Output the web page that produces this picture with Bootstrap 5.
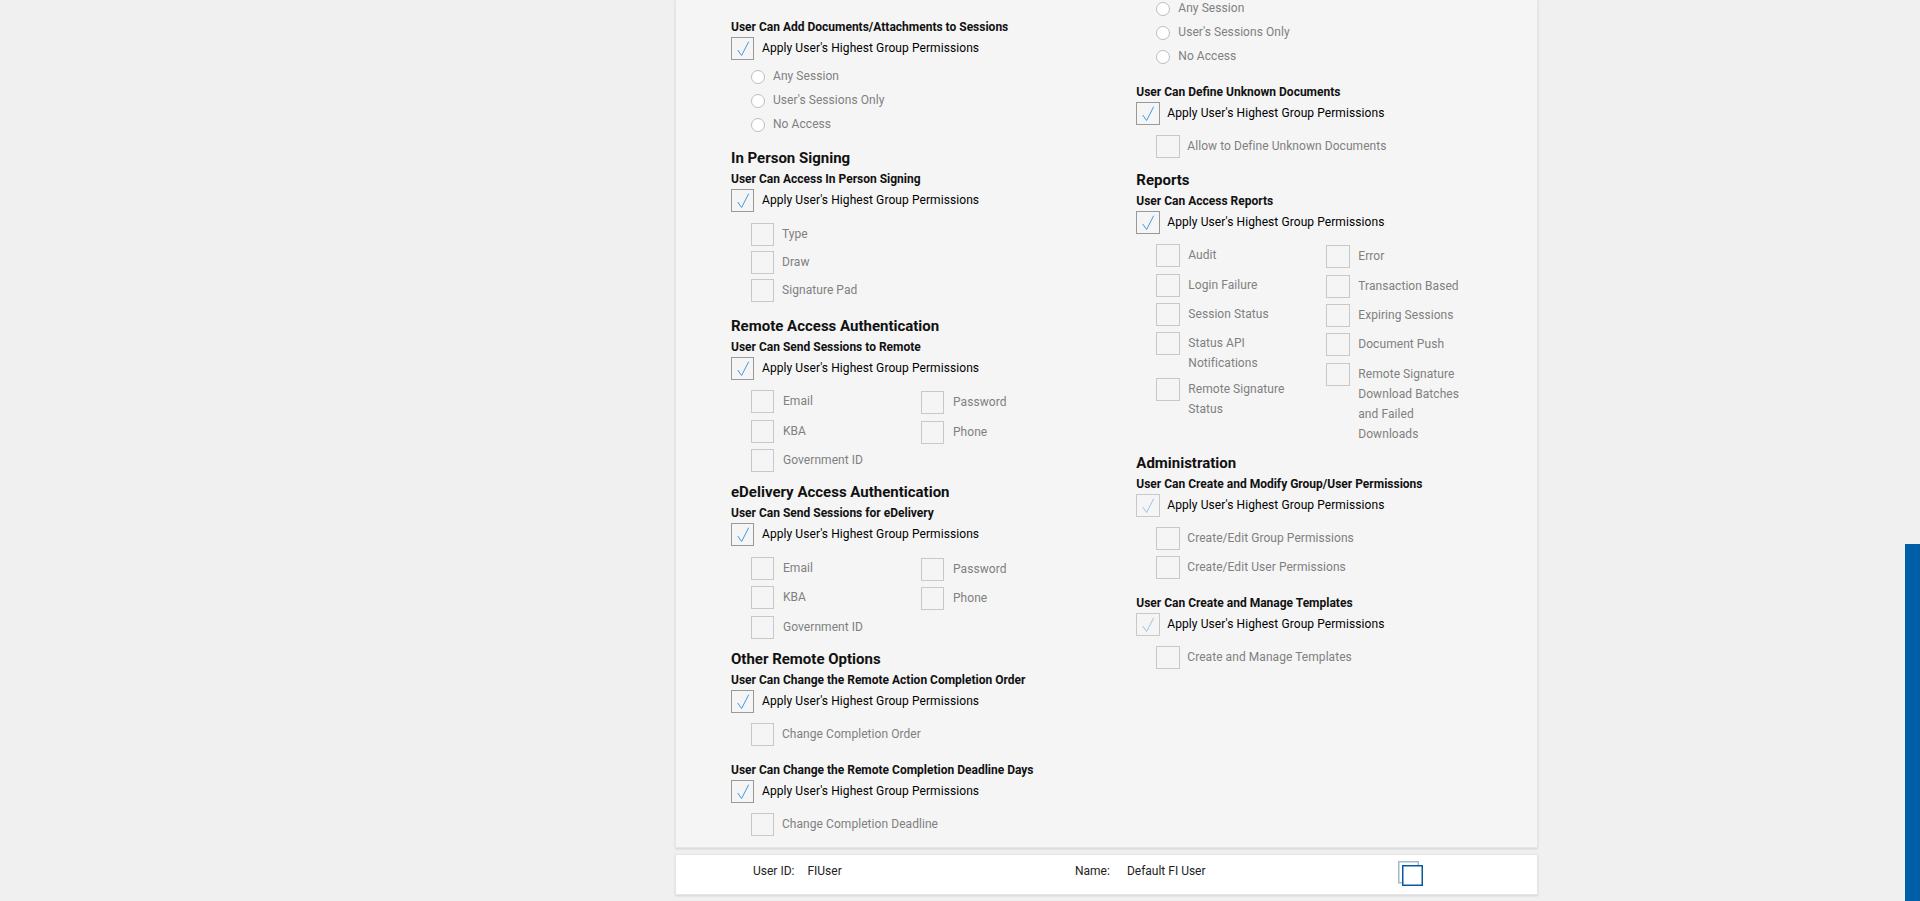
<!DOCTYPE html>
<html lang="en">
<head>
<meta charset="utf-8">
<title>Permissions</title>
<link href="https://cdn.jsdelivr.net/npm/bootstrap@5.3.0/dist/css/bootstrap.min.css" rel="stylesheet">
<style>
html,body{height:901px;overflow:hidden;background:#f0f0f0;}
body{font-family:Roboto,"Liberation Sans",sans-serif;font-size:12px;line-height:20px;color:#000;}
.stage{padding-left:675px;width:1538px;}
.panel{background:#f5f5f5;border:1px solid #e6e6e6;border-top:0;box-shadow:0 1px 2px rgba(0,0,0,.12);padding:0 0 10px 55px;height:848px;overflow:hidden;}
.col-a{width:405.3px;flex:none;padding-top:20px;}
.col-b{flex:none;margin-top:-3px;}
.sec-title{font-size:15px;line-height:20px;font-weight:700;color:#111;margin:0;}
.perm-title{font-size:12px;line-height:14px;font-weight:700;color:#111;margin:0;}
.apply-row{height:23px;margin-top:3px;column-gap:7.6px;line-height:22px;color:#000;letter-spacing:.08px;}
.tick-box{width:23.4px;height:23.4px;flex:none;border:1px solid #999;display:block;background:transparent;}
.tick-box svg{display:block;width:100%;height:100%;}
.tick-box.off{border-color:#c8c8c8;}
.tick-box.off svg{opacity:.5;}
.sub-list{margin-left:20px;}
.opt-row{min-height:24px;column-gap:7.6px;color:#808080;letter-spacing:.06px;}
.split .opt-row{column-gap:8.6px;}
.opt-text{padding-top:1px;line-height:20px;}
.opt-box.form-check-input{width:23.4px;height:23.4px;flex:none;margin:0;border:1px solid #c8c8c8;border-radius:0;background-color:transparent;opacity:1;}
.rad-row{height:24px;color:#808080;column-gap:8px;letter-spacing:.06px;}
.rad.form-check-input{width:14px;height:14px;flex:none;margin:5px 0 0;border:1px solid #bdbdbd;background-color:#fff;opacity:1;}
.rad-row span{line-height:22px;}
.split{width:340px;}
.split-a{width:170px;flex:none;}
.split-b{margin-top:1px;}
.narrow .opt-text{max-width:112px;}
.rb5{margin-bottom:5px;}
.rb6{margin-bottom:6px;}
.tg3{margin-top:3px;}.tg4{margin-top:4px;}.tg5{margin-top:5px;}.tg9{margin-top:9px;}.tg10{margin-top:10px;}.tg11{margin-top:11px;}.tg13{margin-top:13px;}.tg16{margin-top:16px;}
.foot{background:#fff;border:1px solid #e6e6e6;box-shadow:0 1px 2px rgba(0,0,0,.12);height:41px;margin-top:6px;padding:6px 0 0 77px;color:#222;}
.foot-id{width:322px;flex:none;column-gap:13px;}
.foot-name{width:323px;flex:none;column-gap:17px;}
.copy-icon{width:25px;height:25px;flex:none;display:block;}
.scroll-thumb{position:absolute;right:0;top:544px;width:15px;height:357px;background:#005ea6;}
</style>
</head>
<body>
<svg width="0" height="0" class="d-block" aria-hidden="true"><symbol id="tick" viewBox="0 0 21.4 21.4"><path d="M5.7 12 9.6 17.5 16.7 3.7" fill="none" stroke="#3f97e0" stroke-width="1"/></symbol></svg>

<div class="stage">
<main class="panel d-flex">

<div class="col-a">
  <p class="perm-title">User Can Add Documents/Attachments to Sessions</p>
  <div class="apply-row d-flex"><span class="tick-box"><svg><use href="#tick"/></svg></span><span>Apply User's Highest Group Permissions</span></div>
  <div class="sub-list tg5">
    <div class="rad-row d-flex"><input class="form-check-input rad" type="radio" disabled><span>Any Session</span></div>
    <div class="rad-row d-flex"><input class="form-check-input rad" type="radio" disabled><span>User's Sessions Only</span></div>
    <div class="rad-row d-flex"><input class="form-check-input rad" type="radio" disabled><span>No Access</span></div>
  </div>

  <h2 class="sec-title tg11">In Person Signing</h2>
  <p class="perm-title tg4">User Can Access In Person Signing</p>
  <div class="apply-row d-flex"><span class="tick-box"><svg><use href="#tick"/></svg></span><span>Apply User's Highest Group Permissions</span></div>
  <div class="sub-list tg11">
    <div class="opt-row d-flex mb-1"><input class="form-check-input opt-box" type="checkbox" disabled><span class="opt-text">Type</span></div>
    <div class="opt-row d-flex mb-1"><input class="form-check-input opt-box" type="checkbox" disabled><span class="opt-text">Draw</span></div>
    <div class="opt-row d-flex"><input class="form-check-input opt-box" type="checkbox" disabled><span class="opt-text">Signature Pad</span></div>
  </div>

  <h2 class="sec-title tg13">Remote Access Authentication</h2>
  <p class="perm-title tg4">User Can Send Sessions to Remote</p>
  <div class="apply-row d-flex"><span class="tick-box"><svg><use href="#tick"/></svg></span><span>Apply User's Highest Group Permissions</span></div>
  <div class="sub-list split d-flex tg10">
    <div class="split-a">
      <div class="opt-row d-flex rb6"><input class="form-check-input opt-box" type="checkbox" disabled><span class="opt-text">Email</span></div>
      <div class="opt-row d-flex rb5"><input class="form-check-input opt-box" type="checkbox" disabled><span class="opt-text">KBA</span></div>
      <div class="opt-row d-flex rb5"><input class="form-check-input opt-box" type="checkbox" disabled><span class="opt-text">Government ID</span></div>
    </div>
    <div class="split-b">
      <div class="opt-row d-flex rb6"><input class="form-check-input opt-box" type="checkbox" disabled><span class="opt-text">Password</span></div>
      <div class="opt-row d-flex rb5"><input class="form-check-input opt-box" type="checkbox" disabled><span class="opt-text">Phone</span></div>
    </div>
  </div>

  <h2 class="sec-title tg4">eDelivery Access Authentication</h2>
  <p class="perm-title tg4">User Can Send Sessions for eDelivery</p>
  <div class="apply-row d-flex"><span class="tick-box"><svg><use href="#tick"/></svg></span><span>Apply User's Highest Group Permissions</span></div>
  <div class="sub-list split d-flex tg11">
    <div class="split-a">
      <div class="opt-row d-flex rb5"><input class="form-check-input opt-box" type="checkbox" disabled><span class="opt-text">Email</span></div>
      <div class="opt-row d-flex rb6"><input class="form-check-input opt-box" type="checkbox" disabled><span class="opt-text">KBA</span></div>
      <div class="opt-row d-flex rb5"><input class="form-check-input opt-box" type="checkbox" disabled><span class="opt-text">Government ID</span></div>
    </div>
    <div class="split-b">
      <div class="opt-row d-flex rb5"><input class="form-check-input opt-box" type="checkbox" disabled><span class="opt-text">Password</span></div>
      <div class="opt-row d-flex rb5"><input class="form-check-input opt-box" type="checkbox" disabled><span class="opt-text">Phone</span></div>
    </div>
  </div>

  <h2 class="sec-title tg4">Other Remote Options</h2>
  <p class="perm-title tg4">User Can Change the Remote Action Completion Order</p>
  <div class="apply-row d-flex"><span class="tick-box"><svg><use href="#tick"/></svg></span><span>Apply User's Highest Group Permissions</span></div>
  <div class="sub-list tg10">
    <div class="opt-row d-flex"><input class="form-check-input opt-box" type="checkbox" disabled><span class="opt-text">Change Completion Order</span></div>
  </div>
  <p class="perm-title tg16">User Can Change the Remote Completion Deadline Days</p>
  <div class="apply-row d-flex"><span class="tick-box"><svg><use href="#tick"/></svg></span><span>Apply User's Highest Group Permissions</span></div>
  <div class="sub-list tg10">
    <div class="opt-row d-flex"><input class="form-check-input opt-box" type="checkbox" disabled><span class="opt-text">Change Completion Deadline</span></div>
  </div>
</div>

<div class="col-b">
  <div class="sub-list">
    <div class="rad-row d-flex"><input class="form-check-input rad" type="radio" disabled><span>Any Session</span></div>
    <div class="rad-row d-flex"><input class="form-check-input rad" type="radio" disabled><span>User's Sessions Only</span></div>
    <div class="rad-row d-flex"><input class="form-check-input rad" type="radio" disabled><span>No Access</span></div>
  </div>
  <p class="perm-title tg16">User Can Define Unknown Documents</p>
  <div class="apply-row d-flex"><span class="tick-box"><svg><use href="#tick"/></svg></span><span>Apply User's Highest Group Permissions</span></div>
  <div class="sub-list tg10">
    <div class="opt-row d-flex"><input class="form-check-input opt-box" type="checkbox" disabled><span class="opt-text">Allow to Define Unknown Documents</span></div>
  </div>

  <h2 class="sec-title tg11">Reports</h2>
  <p class="perm-title tg4">User Can Access Reports</p>
  <div class="apply-row d-flex"><span class="tick-box"><svg><use href="#tick"/></svg></span><span>Apply User's Highest Group Permissions</span></div>
  <div class="sub-list split narrow d-flex tg10">
    <div class="split-a">
      <div class="opt-row d-flex rb6"><input class="form-check-input opt-box" type="checkbox" disabled><span class="opt-text">Audit</span></div>
      <div class="opt-row d-flex rb5"><input class="form-check-input opt-box" type="checkbox" disabled><span class="opt-text">Login Failure</span></div>
      <div class="opt-row d-flex rb5"><input class="form-check-input opt-box" type="checkbox" disabled><span class="opt-text">Session Status</span></div>
      <div class="opt-row d-flex rb5"><input class="form-check-input opt-box" type="checkbox" disabled><span class="opt-text">Status API Notifications</span></div>
      <div class="opt-row d-flex"><input class="form-check-input opt-box" type="checkbox" disabled><span class="opt-text">Remote Signature Status</span></div>
    </div>
    <div class="split-b">
      <div class="opt-row d-flex rb6"><input class="form-check-input opt-box" type="checkbox" disabled><span class="opt-text">Error</span></div>
      <div class="opt-row d-flex rb5"><input class="form-check-input opt-box" type="checkbox" disabled><span class="opt-text">Transaction Based</span></div>
      <div class="opt-row d-flex rb5"><input class="form-check-input opt-box" type="checkbox" disabled><span class="opt-text">Expiring Sessions</span></div>
      <div class="opt-row d-flex rb6"><input class="form-check-input opt-box" type="checkbox" disabled><span class="opt-text">Document Push</span></div>
      <div class="opt-row d-flex"><input class="form-check-input opt-box" type="checkbox" disabled><span class="opt-text">Remote Signature Download Batches and Failed Downloads</span></div>
    </div>
  </div>

  <h2 class="sec-title tg9">Administration</h2>
  <p class="perm-title tg4">User Can Create and Modify Group/User Permissions</p>
  <div class="apply-row d-flex"><span class="tick-box off"><svg><use href="#tick"/></svg></span><span>Apply User's Highest Group Permissions</span></div>
  <div class="sub-list tg10">
    <div class="opt-row d-flex rb5"><input class="form-check-input opt-box" type="checkbox" disabled><span class="opt-text">Create/Edit Group Permissions</span></div>
    <div class="opt-row d-flex"><input class="form-check-input opt-box" type="checkbox" disabled><span class="opt-text">Create/Edit User Permissions</span></div>
  </div>
  <p class="perm-title tg16">User Can Create and Manage Templates</p>
  <div class="apply-row d-flex"><span class="tick-box off"><svg><use href="#tick"/></svg></span><span>Apply User's Highest Group Permissions</span></div>
  <div class="sub-list tg10">
    <div class="opt-row d-flex"><input class="form-check-input opt-box" type="checkbox" disabled><span class="opt-text">Create and Manage Templates</span></div>
  </div>
</div>
</main>

<footer class="foot d-flex">
  <div class="foot-id d-flex"><span>User ID:</span><span>FIUser</span></div>
  <div class="foot-name d-flex"><span>Name:</span><span>Default FI User</span></div>
  <svg class="copy-icon" viewBox="0 0 25 25" aria-hidden="true">
    <rect x=".75" y=".75" width="19.5" height="21" fill="#fff" stroke="#9fbccc" stroke-width="1.5"/>
    <rect x="4.75" y="4.75" width="19.5" height="19.5" fill="#fff" stroke="#075a9f" stroke-width="1.5"/>
  </svg>
</footer>
</div>

<div class="scroll-thumb"></div>
<script src="https://cdn.jsdelivr.net/npm/bootstrap@5.3.0/dist/js/bootstrap.bundle.min.js"></script>
</body>
</html>
